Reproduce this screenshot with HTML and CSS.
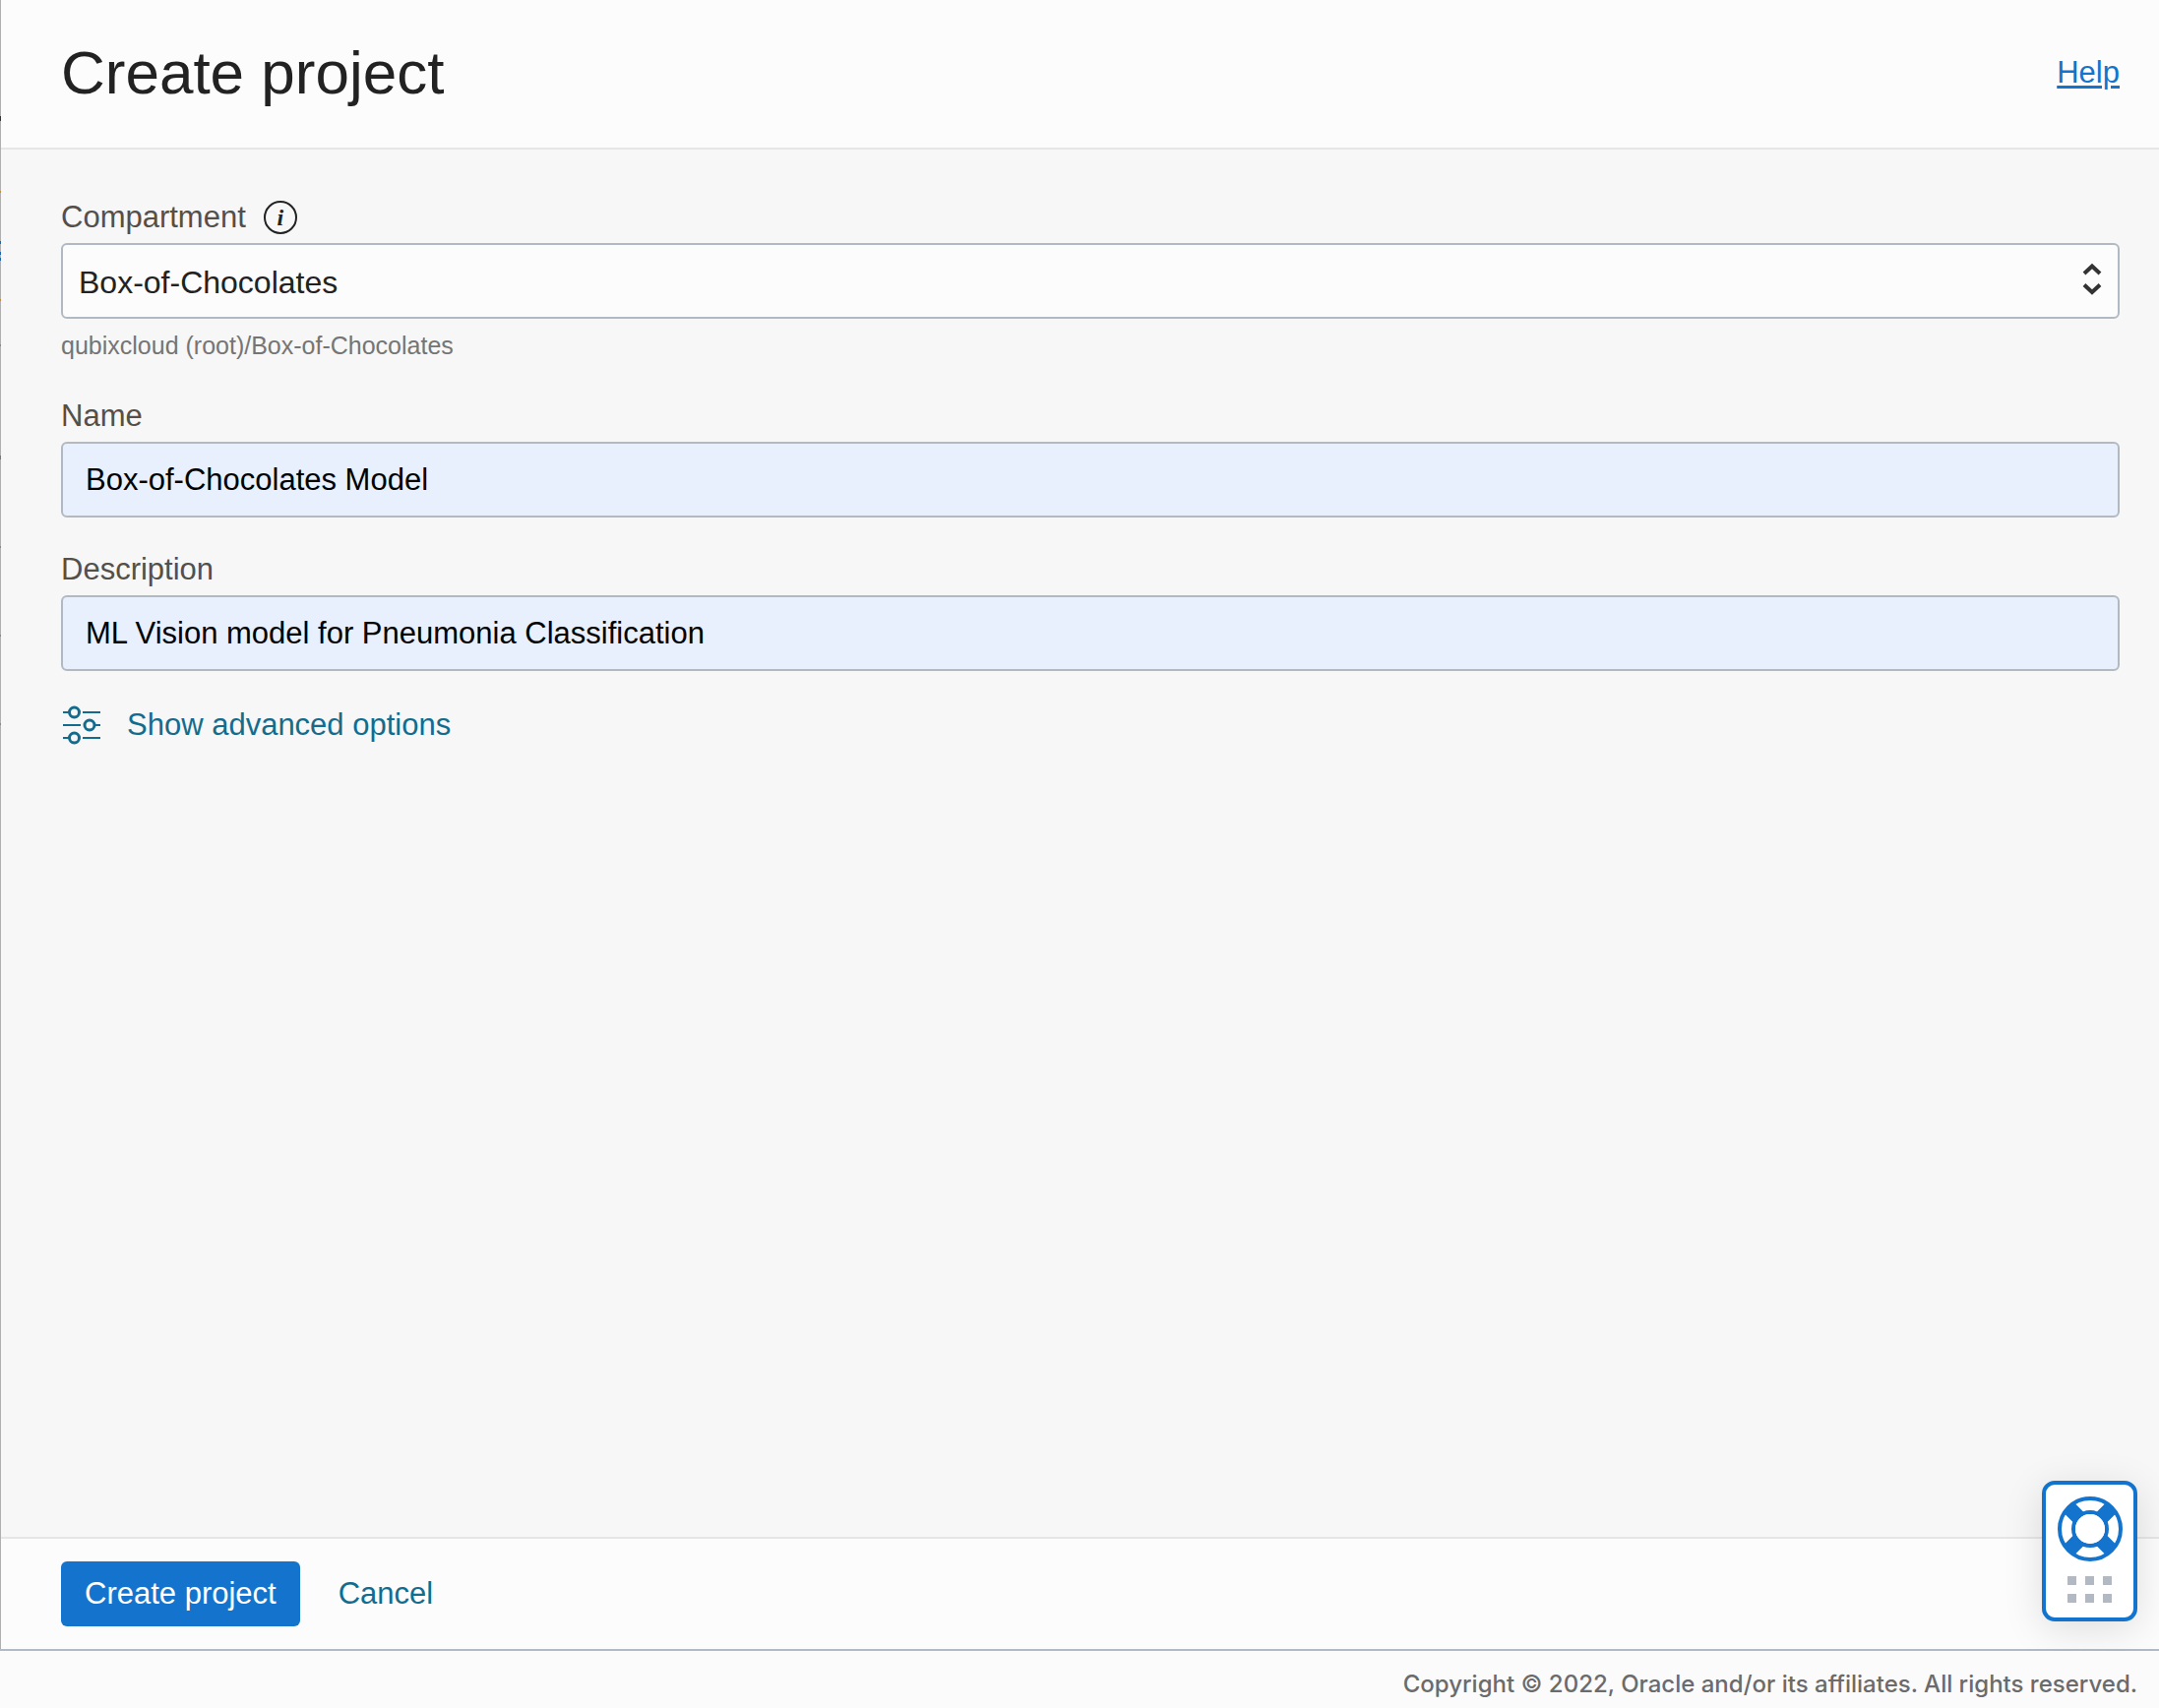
FILE: index.html
```html
<!DOCTYPE html>
<html lang="en">
<head>
  <meta charset="utf-8">
  <meta name="viewport" content="width=device-width, initial-scale=1">
  <title>Create project</title>
  <link rel="stylesheet" href="styles.css">
</head>
<body>
  <main class="panel">
    <header class="panel-header">
      <h1 class="panel-title">Create project</h1>
      <a class="help-link" href="#help">Help</a>
    </header>

    <form class="panel-body" id="project-form">
      <div class="field">
        <div class="label-row">
          <label class="label" for="compartment">Compartment</label>
          <button class="info" type="button" aria-label="About compartments">i</button>
        </div>
        <div class="select-wrap">
          <select class="control control-select" id="compartment">
            <option>Box-of-Chocolates</option>
          </select>
          <svg class="select-arrows" width="20" height="34" viewBox="0 0 20 34" aria-hidden="true">
            <path d="M2 11L10 3.500L18 11M2 22.500L10 30L18 22.500"/>
          </svg>
        </div>
        <p class="hint">qubixcloud (root)/Box-of-Chocolates</p>
      </div>

      <div class="field">
        <label class="label" for="name">Name</label>
        <input class="control control-text" id="name" type="text" value="Box-of-Chocolates Model">
      </div>

      <div class="field">
        <label class="label" for="description">Description</label>
        <input class="control control-text" id="description" type="text" value="ML Vision model for Pneumonia Classification">
      </div>

      <button class="advanced" type="button">
        <svg class="advanced-icon" width="41" height="40" viewBox="-1 0 41 40" aria-hidden="true">
          <path d="M1 7H7M21 7H39M1 20H19M33 20H39M1 33H7M21 33H39"/>
          <circle cx="12.500" cy="7" r="5"/>
          <circle cx="28" cy="20" r="5"/>
          <circle cx="12.500" cy="33" r="5"/>
        </svg>
        <span>Show advanced options</span>
      </button>
    </form>

    <div class="actions">
      <button class="btn btn-primary" type="submit" form="project-form">Create project</button>
      <button class="btn btn-link" type="button">Cancel</button>
    </div>

    <button class="support" type="button" aria-label="Support">
      <svg width="66" height="66" viewBox="-33 -33 66 66" fill="none" stroke="#1474cd" aria-hidden="true">
        <circle r="31" stroke-width="4"/>
        <circle r="17" stroke-width="4"/>
        <path stroke-width="15" d="M-12 -12L-22 -22M12 -12L22 -22M-12 12L-22 22M12 12L22 22"/>
        <circle r="15" fill="#fff" stroke="none"/>
      </svg>
      <svg width="45" height="27" viewBox="0 0 45 27" fill="#b3b9c2" aria-hidden="true">
        <path d="M0 0h9v9H0zM18 0h9v9h-9zM36 0h9v9h-9zM0 18h9v9H0zM18 18h9v9h-9zM36 18h9v9h-9z"/>
      </svg>
    </button>
  </main>

  <footer class="copyright">Copyright © 2022, Oracle and/or its affiliates. All rights reserved.</footer>
</body>
</html>
```
FILE: styles.css
```css
* {
  box-sizing: border-box;
}

body {
  display: flex;
  flex-direction: column;
  min-height: 100vh;
  margin: 0;
  background: #fbfbfb;
  color: #222;
  font-family: "Liberation Sans", Arial, sans-serif;
  font-size: 31px;
  line-height: 36px;
}

button,
input,
select {
  margin: 0;
  font: inherit;
}

button {
  padding: 0;
  border: 0;
  background: none;
  cursor: pointer;
}

/* The left edge lets a one-pixel sliver of the page beneath show through */
.panel {
  position: relative;
  flex: 1;
  display: flex;
  flex-direction: column;
  padding-left: 1px;
  border-bottom: 2px solid #b1b9c2;
  background: linear-gradient(
    #b0b0b0 118px, #333 118px 123px, #b0b0b0 123px 194px,
    #c08a3a 194px 196px, #b0b0b0 196px 245px,
    #1f62a5 245px 248px, #b0b0b0 248px 256px,
    #1f62a5 256px 259px, #b0b0b0 259px 262px,
    #1f62a5 262px 265px, #b0b0b0 265px 304px,
    #c08a3a 304px 306px, #b0b0b0 306px 350px,
    #888 350px 352px, #b0b0b0 352px 463px,
    #777 463px 467px, #b0b0b0 467px 555px,
    #888 555px 557px, #b0b0b0 557px 645px,
    #888 645px 647px, #b0b0b0 647px 735px,
    #888 735px 737px, #b0b0b0 737px);
}

.panel-header {
  display: flex;
  align-items: center;
  justify-content: space-between;
  padding: 38px 40px 40px 61px;
  border-bottom: 2px solid #e6e6e6;
  background: #fcfcfc;
}

.panel-title {
  margin: 0;
  font-size: 62px;
  font-weight: 400;
  line-height: 72px;
}

.help-link {
  color: #1474cd;
  text-decoration-thickness: 3px;
  text-underline-offset: 3px;
}

.panel-body {
  flex: 1;
  display: flex;
  flex-direction: column;
  gap: 35px;
  padding: 51px 40px 40px 61px;
  background: #f7f7f7;
}

.field {
  display: flex;
  flex-direction: column;
  gap: 8px;
}

.label-row {
  display: flex;
  align-items: center;
  gap: 18px;
}

.label {
  color: #544f49;
}

.info {
  width: 34px;
  height: 34px;
  border: 2px solid #222;
  border-radius: 50%;
  color: #222;
  font: italic 700 24px/28px "Liberation Serif", "Times New Roman", serif;
}

.select-wrap {
  display: grid;
  align-items: center;
}

.select-wrap > * {
  grid-area: 1 / 1;
}

.control {
  width: 100%;
  height: 77px;
  border: 2px solid #b1b9c2;
  border-radius: 6px;
}

.control-select {
  appearance: none;
  padding: 2px 60px 0 16px;
  background: #fcfcfc;
  color: #222;
  font-size: 32px;
}

.select-arrows {
  justify-self: end;
  margin: 0 18px 4px 0;
  fill: none;
  stroke: #333;
  stroke-width: 4;
  pointer-events: none;
}

.control-text {
  padding: 0 23px;
  background: #e8effd;
  color: #000;
}

.hint {
  margin: 0;
  color: #757575;
  font-size: 25px;
  line-height: 38px;
}

.advanced {
  display: flex;
  align-items: center;
  align-self: flex-start;
  gap: 26px;
  color: #136c8d;
}

.advanced-icon {
  fill: none;
  stroke: currentColor;
  stroke-width: 2;
}

.advanced-icon circle {
  stroke-width: 3;
}

.actions {
  display: flex;
  align-items: center;
  gap: 39px;
  padding: 23px 61px;
  border-top: 2px solid #e6e6e6;
  background: #fcfcfc;
}

.btn {
  height: 66px;
  border-radius: 6px;
}

.btn-primary {
  padding: 0 24px;
  background: #1474cd;
  color: #fff;
}

.btn-link {
  color: #136c8d;
}

/* Floating support launcher, over the lower right corner of the panel */
.support {
  position: absolute;
  right: 22px;
  bottom: 28px;
  display: flex;
  flex-direction: column;
  align-items: center;
  gap: 15px;
  width: 97px;
  height: 143px;
  padding-top: 12px;
  border: 4px solid #1474cd;
  border-radius: 13px;
  background: #fff;
  box-shadow: 0 8px 40px rgba(0, 0, 0, 0.12);
}

.copyright {
  position: relative;
  padding: 20px 22px 10px;
  background: #fbfbfb;
  color: #6b6b6b;
  font-family: Inter, sans-serif;
  font-size: 24px;
  font-weight: 500;
  line-height: 28px;
  text-align: right;
}
```
